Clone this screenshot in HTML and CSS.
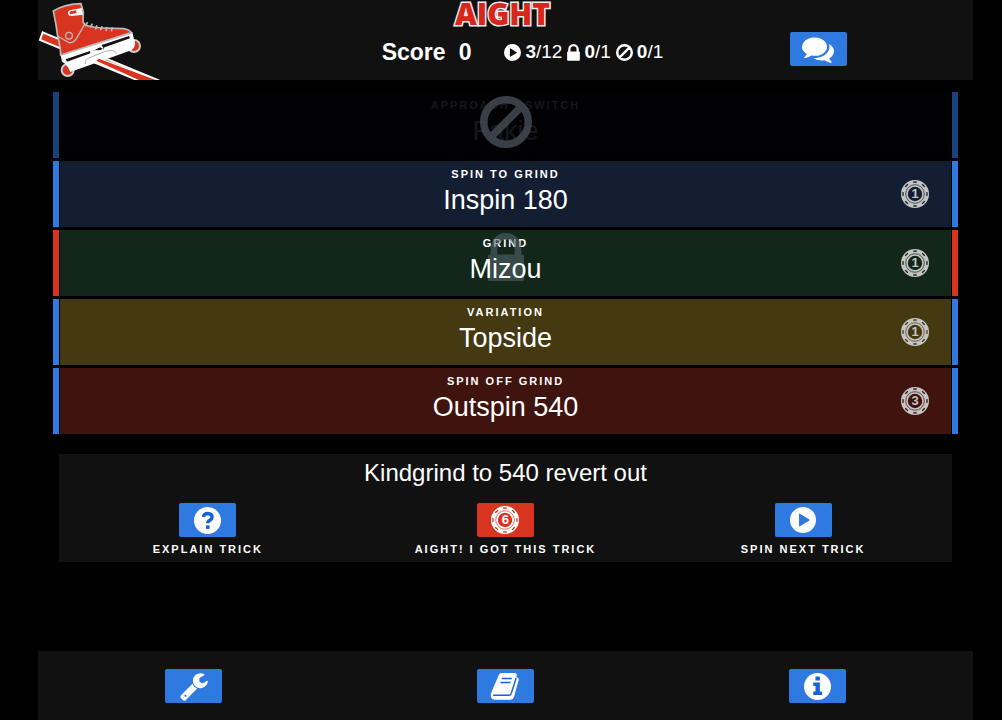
FILE: index.html
```html
<!DOCTYPE html>
<html lang="en">
<head>
<meta charset="utf-8">
<meta name="viewport" content="width=device-width, initial-scale=1">
<title>AIGHT</title>
<link rel="stylesheet" href="styles.css">
</head>
<body>
<svg class="defs" width="0" height="0" aria-hidden="true">
  <symbol id="play" viewBox="0 0 26 26"><path fill-rule="evenodd" d="M13 0a13 13 0 1 0 0 26a13 13 0 0 0 0-26zM9.500 6.600q-.500-.3-.5.4v12q0 .7.6.4l9.800-5.800q.7-.6 0-1.100z"/></symbol>
  <symbol id="ban" viewBox="0 0 52 52"><path fill="none" stroke="currentColor" stroke-width="7.500" d="M26 3.750a22.250 22.250 0 1 0 0 44.500a22.250 22.250 0 0 0 0-44.500zM41.500 10.500l-31 31"/></symbol>
  <symbol id="lock" viewBox="0 0 36 48"><path fill-rule="evenodd" d="M3 21V15a15 15 0 0 1 30 0v6h.5q2.500 0 2.500 2.500v21q0 2.500-2.500 2.500h-31q-2.500 0-2.500-2.500v-21q0-2.500 2.500-2.500zM9.500 21h17v-6a8.500 8.500 0 0 0-17 0z"/></symbol>
  <symbol id="chip" viewBox="0 0 28 28">
    <circle cx="14" cy="14" r="10.600" fill="none" stroke="currentColor" stroke-width="6.800"/>
    <circle cx="14" cy="14" r="12" fill="none" stroke="var(--chip-gap)" stroke-width="1.300" pathLength="80" stroke-dasharray="4 6" stroke-dashoffset="2"/>
    <circle cx="14" cy="14" r="9.300" fill="none" stroke="var(--chip-gap)" stroke-width=".7"/>
  </symbol>
</svg>

<div class="app">
  <header class="bar header">
    <svg class="skate" viewBox="24 0 378 240" role="img" aria-label="Inline skate">
      <path d="M38 97l350 145h-62L30 120z" fill="#d9341f" stroke="#fff" stroke-width="6"/>
      <circle cx="312" cy="138" r="18" fill="#d9341f" stroke="#ccc" stroke-width="6"/>
      <circle cx="113" cy="210" r="18" fill="#d9341f" stroke="#ccc" stroke-width="6"/>
      <path d="M92 166l215-70 5 22q10 20-8 33l-183 65q-10-25-25-31z" fill="#fff"/>
      <path d="M107 178l73-25 1 7-70 25zM190 152l20-10 13 7-8-14 82-27 3 7-76 27-12 8-22 1z" fill="#111"/>
      <path d="M70 33Q105 12 153 11l7 25-1 29q5 12 18 13 20 6 44 6l60 2q18 3 23 12L92 165q0-22-9-56-4-35-13-76z" fill="#d9341f" stroke="#bbb" stroke-width="5"/>
      <path d="M82 108l35 20q15 2 24-15l23-40" fill="none" stroke="#bbb" stroke-width="4"/>
      <circle cx="117" cy="107" r="10" fill="#d9341f" stroke="#bbb" stroke-width="4"/>
      <path d="M155 24l-32 6q-10 2-9 11 2 8 12 7l33-4z" fill="#fff"/>
      <path d="M138 31l-16 3q-6 3-2 9l20-4z" fill="#d9341f"/>
      <path d="M165 78l8-11M181 83l6-12M196 88l5-12M212 91l4-12M228 93l3-12M244 94l3-12" stroke="#bbb" stroke-width="5"/>
      <path d="M166 192q-2-13 13-19l45-18q30-10 36 6" fill="none" stroke="#888" stroke-width="2"/>
      <path d="M205 174l183 68h-62l-130-59z" fill="#d9341f" stroke="#fff" stroke-width="4"/>
    </svg>
    <div class="status">
      <h1 class="brand">AIGHT</h1>
      <div class="stats">
        <strong class="score"><span>Score</span><span>0</span></strong>
        <span class="counts">
          <span class="count"><svg class="count-icon"><use href="#play"/></svg><span><b>3</b>/12</span></span>
          <span class="count"><svg class="count-icon lock-small"><use href="#lock"/></svg><span><b>0</b>/1</span></span>
          <span class="count"><svg class="count-icon"><use href="#ban"/></svg><span><b>0</b>/1</span></span>
        </span>
      </div>
    </div>
    <button class="btn chat" type="button" aria-label="Chat">
      <svg width="32" height="32" viewBox="0 0 1792 1792"><path d="M1408 768q0 139-94 257t-256.500 186.500T704 1280q-86 0-176-16-124 88-278 128-36 9-86 16h-3q-11 0-20.500-8t-11.500-21q-1-3-1-6.500t.5-6.500 2-6l2.500-5 3.500-5.500 4-5 4.500-5 4-4.500q5-6 23-25t26-29.500 22.500-29 25-38.500 20.500-44q-124-72-195-177T0 768q0-139 94-257t256.500-186.500T704 256t353.500 68.500T1314 511t94 257zm384 256q0 120-71 224.500T1526 1425q10 24 20.500 44t25 38.500 22.500 29 26 29.500 23 25q1 1 4 4.500t4.500 5 4 5 3.500 5.500l2.500 5 2 6 .5 6.500-1 6.500q-3 14-13 22t-22 7q-50-7-86-16-154-40-278-128-90 16-176 16-271 0-472-132 58 4 88 4 161 0 309-45t264-129q125-92 192-212t67-254q0-77-23-152 129 71 204 178t75 230z"/></svg>
    </button>
  </header>

  <main>
    <section class="reels">
      <div class="reel off">
        <div class="face">
          <div class="text"><span class="caption">Approach / Switch</span><span class="value">Fakie</span></div>
        </div>
        <svg class="mark mark-ban"><use href="#ban"/></svg>
      </div>
      <div class="reel">
        <div class="face navy">
          <div class="text"><span class="caption">Spin to grind</span><span class="value">Inspin 180</span></div>
          <span class="chip"><svg><use href="#chip"/></svg><b>1</b></span>
        </div>
      </div>
      <div class="reel locked">
        <div class="face green">
          <div class="text"><span class="caption">Grind</span><span class="value">Mizou</span></div>
          <span class="chip"><svg><use href="#chip"/></svg><b>1</b></span>
        </div>
        <svg class="mark mark-lock"><use href="#lock"/></svg>
      </div>
      <div class="reel">
        <div class="face olive">
          <div class="text"><span class="caption">Variation</span><span class="value">Topside</span></div>
          <span class="chip"><svg><use href="#chip"/></svg><b>1</b></span>
        </div>
      </div>
      <div class="reel">
        <div class="face maroon">
          <div class="text"><span class="caption">Spin off grind</span><span class="value">Outspin 540</span></div>
          <span class="chip"><svg><use href="#chip"/></svg><b>3</b></span>
        </div>
      </div>
    </section>

    <section class="panel">
      <h2 class="trick">Kindgrind to 540 revert out</h2>
      <div class="actions">
        <div class="action">
          <button class="btn" type="button" id="explain"><svg width="27" height="27" viewBox="0 0 27 27"><circle cx="13.500" cy="13.500" r="13.500"/><path class="cut" d="M9.300 9.800q.8-3.300 4.500-3.300 4.300.3 4.300 3.500 0 2-2.200 3.300-2.100 1-2.100 3" fill="none" stroke-width="3.400"/><path class="cut-fill" d="M12 18.300h3.600v3.600h-3.600z"/></svg></button>
          <label class="caption" for="explain">Explain trick</label>
        </div>
        <div class="action">
          <button class="btn red" type="button" id="aight"><span class="chip"><svg><use href="#chip"/></svg><b>6</b></span></button>
          <label class="caption" for="aight">Aight! I got this trick</label>
        </div>
        <div class="action">
          <button class="btn" type="button" id="next"><svg width="26" height="26"><use href="#play"/></svg></button>
          <label class="caption" for="next">Spin next trick</label>
        </div>
      </div>
    </section>
  </main>

  <footer class="bar footer">
    <button class="btn" type="button" aria-label="Settings">
      <svg width="30" height="30" viewBox="0 0 1792 1792"><path d="M448 1472q0-26-19-45t-45-19-45 19-19 45 19 45 45 19 45-19 19-45zm644-420l-682 682q-37 37-90 37-52 0-91-37L123 1626q-38-36-38-90 0-53 38-91l681-681q39 98 114.500 173.500T1092 1052zm634-435q0 39-23 106-47 134-164.500 217.500T1280 1024q-185 0-316.500-131.500T832 576t131.500-316.500T1280 128q58 0 121.500 16.500T1509 191q16 11 16 28t-16 28l-293 169v224l193 107q5-3 79-48.500t135.500-81T1694 582q15 0 23.500 10t8.500 25z"/></svg>
    </button>
    <button class="btn" type="button" aria-label="Book">
      <svg width="30" height="27" viewBox="0 0 30 27"><path d="M9 1.500Q9.600 0 11.500 0H25q2 0 1.700 2L26.400 4q2.900.8 2.300 3l-4.600 16.500q-.9 3.200-4 3.200H4.500Q.8 26.300.8 22.800q0-2 .8-4z"/><path class="cut" d="M11.800 5.500h10M10.500 9.500h10M3.200 22.300h15.500q2 0 2.600-2L26.200 4.800" fill="none" stroke-width="1.400"/></svg>
    </button>
    <button class="btn" type="button" aria-label="Info">
      <svg width="27" height="27" viewBox="0 0 27 27"><circle cx="13.500" cy="13.500" r="13.500"/><path class="cut-fill" d="M11.500 3.500h4.400v4h-4.400zM9.300 9.500h6.600v9h2.200v3.600h-8.800v-3.600h2.200v-5.500h-2.200z"/></svg>
    </button>
  </footer>
</div>
</body>
</html>
```

FILE: styles.css
```css
* {
  box-sizing: border-box;
}

body {
  margin: 0;
  background: #000;
  color: #fff;
  font-family: "Liberation Sans", Arial, Helvetica, sans-serif;
}

.defs {
  position: absolute;
}

svg {
  display: block;
  fill: currentColor;
}

.app {
  display: flex;
  flex-direction: column;
  min-height: 100vh;
  margin: 0 29px 0 38px;
}

.bar {
  display: grid;
  grid-template-columns: repeat(3, 1fr);
  justify-items: center;
  background: #111;
}

/* Header */

.header {
  height: 80px;
}

.skate {
  width: 126px;
  height: 80px;
  justify-self: start;
}

.status {
  display: flex;
  flex-direction: column;
  align-items: center;
  white-space: nowrap;
}

.brand {
  margin: 0 6px 0 0;
  color: #d9261a;
  font: 800 30px/28px "Open Sans", sans-serif;
  -webkit-text-stroke: 3px #eee;
  paint-order: stroke fill;
}

.stats {
  display: flex;
  align-items: center;
  gap: 33px;
  height: 48px;
  padding-left: 34px;
}

.score {
  display: flex;
  gap: 13px;
  font-size: 23px;
}

.counts {
  display: flex;
  gap: 5px;
  font-size: 19px;
}

.count {
  display: flex;
  align-items: center;
  gap: 4px;
}

.count-icon {
  width: 17px;
  height: 17px;
}

.lock-small {
  width: 13px;
}

.chat {
  margin-top: 32px;
}

/* Buttons */

.btn {
  display: flex;
  align-items: center;
  justify-content: center;
  width: 57px;
  height: 34px;
  padding: 0;
  border: 0;
  border-radius: 2px;
  background: #2f7ae0;
  color: #fff;
  font: inherit;
  cursor: pointer;
}

.btn.red {
  --chip-gap: #d7351f;
  background: #d7351f;
}

.cut {
  stroke: #1763dc;
}

.cut-fill {
  fill: #1763dc;
}

/* Reels */

.reels {
  display: grid;
  gap: 3px;
  padding: 12px 15px 0;
}

.reel {
  position: relative;
  height: 66px;
  padding: 0 1px;
  border: solid #2f7ae0;
  border-width: 0 6px;
}

.reel.locked {
  border-color: #d7351f;
}

.reel.off {
  border-color: #17427c;
  color: #161719;
}

.face {
  display: grid;
  grid-template-columns: 1fr auto 1fr;
  align-items: center;
  height: 100%;
  padding: 0 22px;
  background: #020204;
}

.navy {
  --chip-gap: #141e32;
  background: #141e32;
}

.green {
  --chip-gap: #12271a;
  background: #12271a;
}

.olive {
  --chip-gap: #443910;
  background: #443910;
}

.maroon {
  --chip-gap: #3f130e;
  background: #3f130e;
}

.text {
  display: flex;
  flex-direction: column;
  grid-column: 2;
  align-items: center;
  padding-bottom: 2px;
}

.caption {
  font-size: 11px;
  font-weight: 700;
  line-height: 14px;
  letter-spacing: 2px;
  text-transform: uppercase;
}

.value {
  position: relative;
  z-index: 1;
  font-size: 27px;
  line-height: 38px;
}

.off .value {
  z-index: auto;
}

.mark {
  position: absolute;
  left: 50%;
  transform: translateX(-50%);
}

.mark-ban {
  top: 4px;
  width: 52px;
  height: 52px;
  color: rgba(66, 73, 82, 0.86);
}

.mark-lock {
  top: 3px;
  width: 37px;
  height: 49px;
  color: rgba(84, 98, 108, 0.6);
}

.chip {
  display: grid;
  place-items: center;
  justify-self: end;
  width: 28px;
  height: 28px;
  font-size: 13px;
  line-height: 28px;
}

.chip > * {
  grid-area: 1 / 1;
}

.chip svg {
  width: 28px;
  height: 28px;
}

.face .chip {
  color: #c4c4c4;
}

/* Trick panel */

.panel {
  margin: 20px 21px 0;
  padding: 0 0 6px;
  background: #111;
}

.trick {
  margin: 0;
  font-size: 24px;
  font-weight: 400;
  line-height: 38px;
  text-align: center;
}

.actions {
  display: grid;
  grid-template-columns: repeat(3, 1fr);
  padding-top: 11px;
}

.action {
  display: flex;
  flex-direction: column;
  align-items: center;
  gap: 5px;
}

/* Footer */

.footer {
  margin-top: auto;
  padding: 18px 0 17px;
}
```
